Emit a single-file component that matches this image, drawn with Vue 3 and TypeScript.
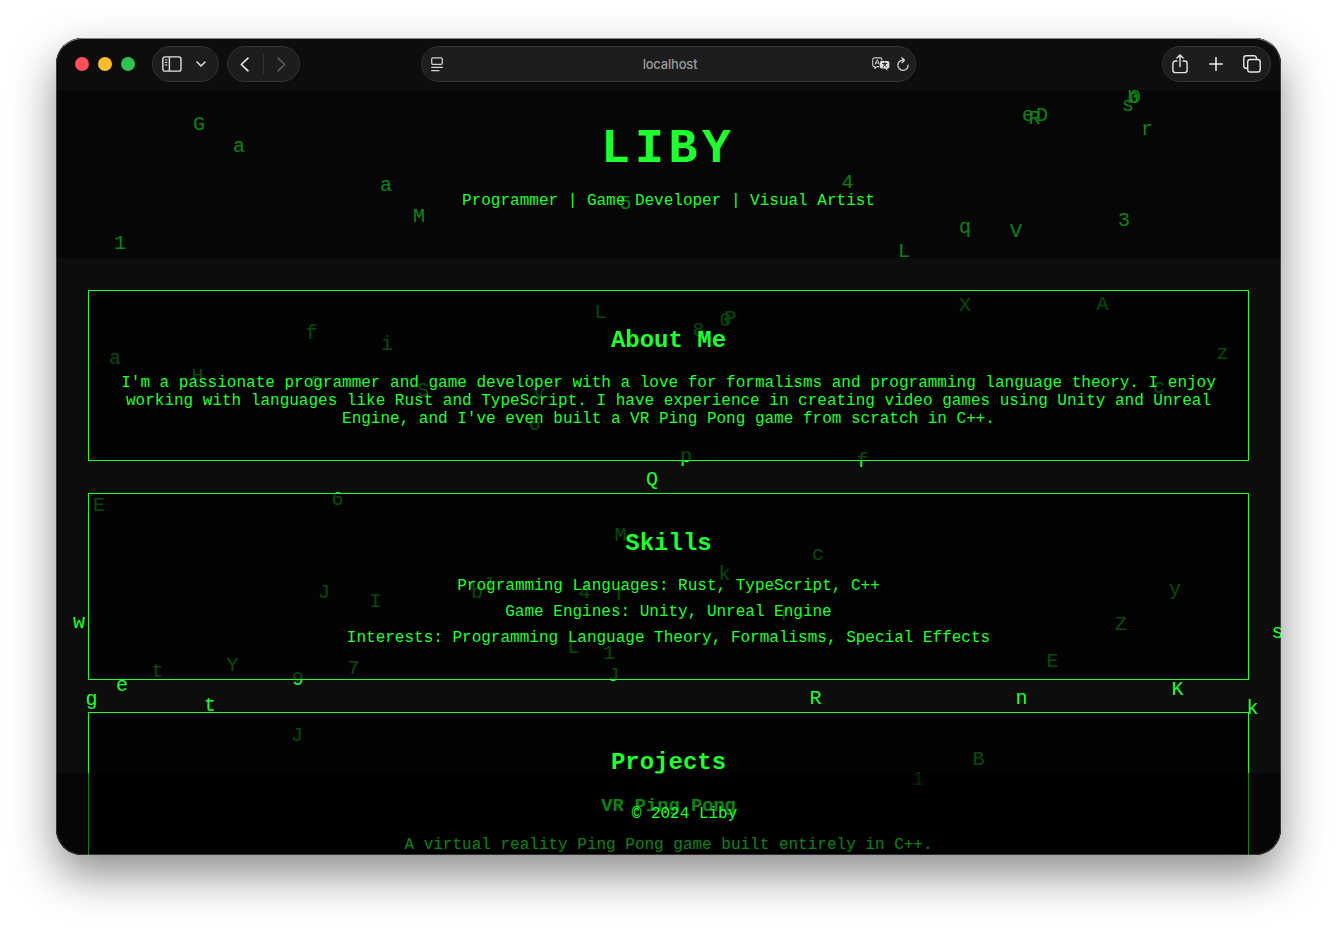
<script setup lang="ts">
interface Glyph {
  char: string
  x: number
  baseline: number
}

// Falling characters: [character, centre x, baseline y] on the page canvas.
const rain: [string, number, number][] = [
  ['G', 143, 40], ['a', 183, 62], ['a', 330, 101], ['M', 363, 132], ['1', 64, 159],
  ['4', 791.5, 98], ['5', 569.5, 119], ['e', 972, 31], ['D', 986, 31], ['R', 978.5, 34],
  ['s', 1072, 21], ['b', 1077, 13], ['0', 1079, 13], ['r', 1091, 45], ['3', 1068, 136],
  ['q', 909, 143], ['V', 960, 147], ['L', 848, 167],
  ['f', 255.5, 249], ['i', 331, 260], ['a', 59, 274], ['H', 141.5, 292], ['o', 260, 297],
  ['S', 367, 306], ['L', 544.5, 228], ['8', 642.5, 246], ['0', 669.5, 236], ['P', 674.5, 234],
  ['y', 483, 309], ['6', 478.5, 340], ['p', 630, 372], ['f', 806.5, 377], ['Q', 596, 395],
  ['X', 909, 221], ['A', 1046.5, 220], ['z', 1166.5, 269], ['c', 1103, 303],
  ['E', 43, 421], ['6', 281.5, 415], ['M', 564.5, 451], ['c', 762, 470], ['k', 668.5, 490],
  ['J', 432, 500], ['b', 421, 508], ['J', 268, 508], ['I', 319.5, 517], ['4', 528.5, 508],
  ['r', 565, 510], ['r', 730, 530], ['y', 1119, 505], ['Z', 1065, 540], ['E', 996.5, 577],
  ['L', 517.5, 563], ['1', 553, 569], ['J', 557.5, 591], ['t', 101.5, 587], ['Y', 176.5, 581],
  ['7', 297.5, 584], ['9', 242, 595], ['w', 23, 538], ['s', 1221.5, 548], ['e', 66, 601],
  ['g', 35.5, 615], ['t', 154, 621], ['R', 759.5, 614], ['n', 965.5, 614], ['K', 1121.5, 605],
  ['k', 1196.5, 624], ['J', 241, 651], ['B', 922.5, 675], ['1', 862, 695],
]

const glyphs: Glyph[] = rain.map(([char, x, baseline]) => ({ char, x, baseline }))

const skills: string[] = [
  'Programming Languages: Rust, TypeScript, C++',
  'Game Engines: Unity, Unreal Engine',
  'Interests: Programming Language Theory, Formalisms, Special Effects',
]
</script>

<template>
  <div class="desktop">
    <div class="window">
      <div class="toolbar">
        <div class="side">
          <div class="lights">
            <i class="red"></i><i class="yellow"></i><i class="green"></i>
          </div>
          <div class="pill sidebar-pill">
            <svg width="20" height="16" viewBox="0 0 20 16" fill="none" stroke="#e2e2e2" stroke-width="1.4">
              <rect x="0.8" y="0.9" width="18.2" height="14.2" rx="2.2" />
              <path d="M7.4 1v14" />
              <path d="M2.8 4h2.6M2.8 6.5h2.6M2.8 9h2.6" stroke-width="1.2" />
            </svg>
            <svg width="10" height="6" viewBox="0 0 10 6" fill="none" stroke="#e2e2e2" stroke-width="1.5" stroke-linecap="round" stroke-linejoin="round">
              <path d="M1 1l4 4 4-4" />
            </svg>
          </div>
          <div class="pill nav-pill">
            <svg width="9" height="15" viewBox="0 0 9 15" fill="none" stroke="#ededed" stroke-width="1.6" stroke-linecap="round" stroke-linejoin="round">
              <path d="M8 1.2L1.300 7.500l6.700 6.300" />
            </svg>
            <span class="divider"></span>
            <svg width="9" height="15" viewBox="0 0 9 15" fill="none" stroke="#5c5c5c" stroke-width="1.6" stroke-linecap="round" stroke-linejoin="round">
              <path d="M1 1.200l6.700 6.300L1 13.800" />
            </svg>
          </div>
        </div>

        <div class="pill address">
          <svg width="12" height="15" viewBox="0 0 12 15" fill="none" stroke="#d6d6d6" stroke-width="1.2" stroke-linecap="round">
            <rect x="0.7" y="0.9" width="10.6" height="6.4" rx="1.3" />
            <path d="M0.7 10.4h10.6M0.7 13.7h7.2" />
          </svg>
          <span class="host">localhost</span>
          <span class="address-icons">
            <svg width="18" height="14" viewBox="0 0 18 14" fill="none" stroke-linejoin="round" stroke-linecap="round">
              <path d="M7 9.6H5L2.8 11.5V9.6H2.4A1.7 1.7 0 0 1 .7 7.9V2.6A1.7 1.7 0 0 1 2.4.9h5.8a1.7 1.7 0 0 1 1.7 1.7v.7" stroke="#c9c9c9" stroke-width="1.1" />
              <path d="M3.2 7.2L5.2 2.7l2 4.5M3.8 5.9h2.8" stroke="#c9c9c9" stroke-width="1" />
              <path d="M9.6 3.9h6a1.8 1.8 0 0 1 1.8 1.8v4a1.8 1.8 0 0 1-1.8 1.8h-.3v1.9l-2.2-1.9H9.6a1.8 1.8 0 0 1-1.8-1.8v-4a1.8 1.8 0 0 1 1.8-1.8z" fill="#dedede" />
              <path d="M10.6 6.5h4.2M12.7 5.6v.9M11 9.8l3.2-3M14.4 9.8l-3.2-3" stroke="#242424" stroke-width="1" />
            </svg>
            <svg width="12" height="15" viewBox="0 0 12 15" fill="none" stroke="#dadada" stroke-width="1.25" stroke-linecap="round" stroke-linejoin="round">
              <path d="M6.6 3.2A5.1 5.1 0 1 0 11.1 8.2" />
              <path d="M4.9.8l2.5 2.4-2.4 2.5" />
            </svg>
          </span>
        </div>

        <div class="side end">
          <div class="pill actions">
            <svg width="16" height="20" viewBox="0 0 16 20" fill="none" stroke="#e6e6e6" stroke-width="1.4" stroke-linecap="round" stroke-linejoin="round">
              <path d="M5 7H3.300A2.400 2.400 0 0 0 .9 9.400v6.800a2.400 2.400 0 0 0 2.400 2.400h9.400a2.400 2.400 0 0 0 2.400-2.400V9.400A2.400 2.400 0 0 0 12.700 7H11" />
              <path d="M8 12.500V1M4.900 3.900L8 .900l3.100 3" />
            </svg>
            <svg width="14" height="14" viewBox="0 0 14 14" fill="none" stroke="#ededed" stroke-width="1.6" stroke-linecap="round">
              <path d="M7 .8v12.400M.8 7h12.400" />
            </svg>
            <svg width="18" height="18" viewBox="0 0 18 18" fill="none" stroke="#e6e6e6" stroke-width="1.4" stroke-linejoin="round">
              <rect x="4.700" y="4.500" width="12.500" height="12.500" rx="2.600" />
              <path d="M4.500 13.300H3.200A2.400 2.400 0 0 1 .8 10.900V3.200A2.400 2.400 0 0 1 3.200.8h7.900a2.400 2.400 0 0 1 2.400 2.400v1.100" />
            </svg>
          </div>
        </div>
      </div>

      <div class="page">
        <div class="rain">
          <span
            v-for="(g, i) in glyphs"
            :key="i"
            class="glyph"
            :style="{ left: g.x - 6 + 'px', top: g.baseline - 17 + 'px' }"
          >{{ g.char }}</span>
        </div>

        <header>
          <h1>LIBY</h1>
          <p>Programmer | Game Developer | Visual Artist</p>
        </header>

        <main>
          <section>
            <h2>About Me</h2>
            <p>
              I'm a passionate programmer and game developer with a love for formalisms and
              programming language theory. I enjoy working with languages like Rust and TypeScript.
              I have experience in creating video games using Unity and Unreal Engine, and I've even
              built a VR Ping Pong game from scratch in C++.
            </p>
          </section>
          <section>
            <h2>Skills</h2>
            <ul>
              <li v-for="skill in skills" :key="skill">{{ skill }}</li>
            </ul>
          </section>
          <section>
            <h2>Projects</h2>
            <h3>VR Ping Pong</h3>
            <p>A virtual reality Ping Pong game built entirely in C++.</p>
          </section>
        </main>

        <footer>© 2024 Liby</footer>
      </div>
    </div>
  </div>
</template>

<style>
body {
  margin: 0;
  background: #fff;
  overflow: hidden;
}
</style>

<style scoped>
.desktop {
  box-sizing: border-box;
  width: 1337px;
  height: 929px;
  padding: 38px 56px;
  overflow: hidden;
  background: #fff;
}

.window {
  position: relative;
  width: 1225px;
  height: 817px;
  border-radius: 26px;
  overflow: hidden;
  background: #0d0d0d;
  box-shadow: 0 20px 45px rgba(0, 0, 0, 0.45);
}

.window::after {
  content: '';
  position: absolute;
  inset: 0;
  border: 1px solid rgba(255, 255, 255, 0.2);
  border-top-color: rgba(255, 255, 255, 0.5);
  border-radius: 26px;
  z-index: 5;
  pointer-events: none;
}

.toolbar {
  box-sizing: border-box;
  height: 52px;
  display: grid;
  grid-template-columns: 1fr 495px 1fr;
  align-items: center;
  padding: 0 10px;
  background: #0d0d0d;
}

.side {
  display: flex;
  align-items: center;
}

.end {
  justify-content: flex-end;
}

.lights {
  display: flex;
  gap: 9px;
  padding-left: 9px;
  margin-right: 17px;
}

.lights i {
  width: 14px;
  height: 14px;
  border-radius: 50%;
}

.red { background: #ff4f57; }
.yellow { background: #fcbc2e; }
.green { background: #2fc255; }

.pill {
  box-sizing: border-box;
  height: 36px;
  border: 1px solid #343434;
  border-radius: 18px;
  background: #1d1d1d;
  display: flex;
  align-items: center;
}

.sidebar-pill {
  width: 67px;
  padding: 0 12px 0 9px;
  justify-content: space-between;
  margin-right: 8px;
}

.nav-pill {
  width: 73px;
  padding: 0 13px 0 12px;
  justify-content: space-between;
}

.divider {
  width: 1px;
  height: 20px;
  background: #363636;
}

.address {
  display: grid;
  grid-template-columns: 1fr auto 1fr;
  padding: 0 6px 0 9px;
}

.host {
  font: 500 13px/16px Inter, 'Liberation Sans', sans-serif;
  letter-spacing: -0.2px;
  color: #9a9a9a;
}

.address-icons {
  display: flex;
  align-items: center;
  justify-content: flex-end;
  gap: 7px;
}

.actions {
  width: 109px;
  padding: 0 9px 0 9px;
  justify-content: space-between;
}

.page {
  position: relative;
  height: 765px;
  overflow: hidden;
  background: #0d0d0d;
  color: #1fff2f;
  font-family: 'Courier New', 'Liberation Mono', monospace;
  font-size: 16px;
  line-height: 18px;
  text-align: center;
}

.rain {
  position: absolute;
  inset: 0;
}

.glyph {
  position: absolute;
  font-size: 20px;
  line-height: 23px;
}

header {
  position: relative;
  height: 168px;
  box-sizing: border-box;
  padding: 32px;
  background: rgba(0, 0, 0, 0.5);
}

h1 {
  margin: 0;
  font-size: 48px;
  line-height: 54px;
  letter-spacing: 4.8px;
}

header p {
  margin: 16px 0;
}

main {
  position: relative;
  display: flex;
  flex-direction: column;
  gap: 32px;
  padding: 32px;
}

section {
  padding: 32px;
  border: 1px solid #1fff2f;
  background: rgba(0, 0, 0, 0.72);
}

h2 {
  margin: 0 0 16px;
  font-size: 24px;
  line-height: 35px;
}

h3 {
  margin: 0 0 18.7px;
  font-size: 18.72px;
  line-height: 21px;
}

section p {
  margin: 0;
}

ul {
  list-style: none;
  margin: 0;
  padding: 0;
  display: flex;
  flex-direction: column;
  gap: 8px;
}

footer {
  position: absolute;
  left: 0;
  right: 0;
  bottom: 0;
  padding: 32px 0 32px 32px;
  background: rgba(0, 0, 0, 0.5);
}
</style>
